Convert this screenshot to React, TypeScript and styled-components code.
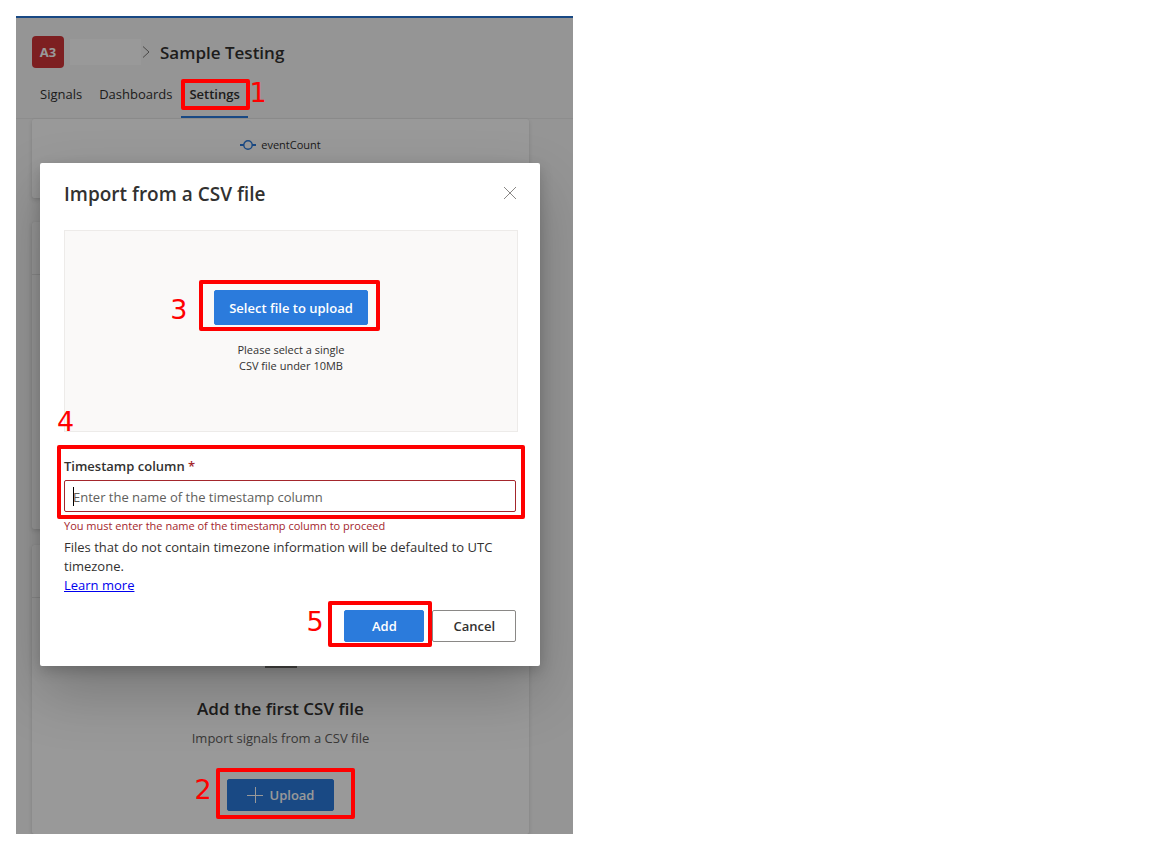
import React from "react";
import styled, { createGlobalStyle, css } from "styled-components";

const GlobalStyle = createGlobalStyle`
  *, *::before, *::after { box-sizing: border-box; }
  body {
    margin: 0;
    background: #fff;
    color: #323130;
    font: 13px/20px "Segoe UI", "Open Sans", "Noto Sans", sans-serif;
  }
  button, input { font: inherit; color: inherit; }
  h1, h2, p { margin: 0; }
`;

const Page = styled.div`
  padding: 16px;
`;

const Screen = styled.div`
  position: relative;
  display: flex;
  flex-direction: column;
  max-width: 557px;
  overflow: hidden;
  background: #f8f8f8;
`;

const TopBar = styled.div`
  height: 2px;
  background: #2b7bdc;
`;

const Header = styled.header`
  display: flex;
  flex-direction: column;
  justify-content: space-between;
  height: 101px;
  padding: 18px 16px 0;
  border-bottom: 1px solid #ececec;
`;

const Breadcrumb = styled.div`
  display: flex;
  align-items: center;
`;

const Avatar = styled.span`
  display: grid;
  place-items: center;
  width: 32px;
  height: 32px;
  border-radius: 4px;
  background: #d13438;
  color: #fff;
  font-weight: 700;
`;

const ProjectName = styled.span`
  width: 71px;
  height: 26px;
  margin-left: 6px;
  background: #fff;
`;

const Chevron = styled.svg`
  width: 9px;
  height: 14px;
  margin: 0 9px 0 1px;
`;

const PageTitle = styled.h1`
  padding-top: 2px;
  font-size: 17px;
  font-weight: 600;
  line-height: 24px;
`;

const Tabs = styled.nav`
  display: flex;
  gap: 1px;
`;

const Tab = styled.a<{ $active?: boolean }>`
  position: relative;
  height: 36px;
  padding: 2px 8px 0;
  color: #323130;
  text-decoration: none;
  ${(p) =>
    p.$active &&
    css`
      font-weight: 600;
      border-bottom: 2px solid #2b7bdc;
    `}
`;

const Content = styled.main`
  display: flex;
  flex-direction: column;
  padding: 0 44px 0 16px;
`;

const Card = styled.section<{ $height: number; $gap?: number }>`
  display: flex;
  flex-direction: column;
  height: ${(p) => p.$height}px;
  margin-bottom: ${(p) => p.$gap ?? 0}px;
  border-radius: 2px;
  background: #fff;
  box-shadow: 0 2px 4px rgba(0, 0, 0, 0.13), 0 0 1px rgba(0, 0, 0, 0.11);
`;

const CardHead = styled.div`
  height: 53px;
  flex: none;
  border-bottom: 1px solid #e6e6e6;
`;

const Legend = styled.div`
  display: flex;
  align-items: center;
  justify-content: center;
  gap: 5px;
  padding-top: 16px;
  font-size: 11px;
`;

const EmptyState = styled.div`
  display: flex;
  flex-direction: column;
  align-items: center;
  padding-top: 38px;
`;

const EmptyTitle = styled.h2`
  margin-top: 29px;
  font-size: 17px;
  font-weight: 600;
  line-height: 24px;
`;

const EmptyText = styled.p`
  margin: 7px 0 31px;
  color: #605e5c;
`;

const Marked = styled.div`
  position: relative;
`;

const Button = styled.button<{ $primary?: boolean; $tall?: boolean; $pad?: number }>`
  display: inline-flex;
  align-items: center;
  justify-content: center;
  gap: 7px;
  min-width: 80px;
  height: ${(p) => (p.$tall ? 35 : 32)}px;
  padding: 0 ${(p) => p.$pad ?? 14}px;
  border: 1px solid ${(p) => (p.$primary ? "#2b7bdc" : "#8a8886")};
  border-radius: 2px;
  background: ${(p) => (p.$primary ? "#2b7bdc" : "#fff")};
  color: ${(p) => (p.$primary ? "#fff" : "#323130")};
  font-weight: 600;
  white-space: nowrap;
`;

const Mark = styled.span<{ $inset: string }>`
  position: absolute;
  z-index: 3;
  inset: ${(p) => p.$inset};
  border: 4px solid #f00;
  border-radius: 2px;
  pointer-events: none;
`;

const StepNumber = styled.span<{ $left: number; $top: number }>`
  position: absolute;
  z-index: 3;
  left: ${(p) => p.$left}px;
  top: ${(p) => p.$top}px;
  color: #f00;
  font: 400 27px/32px "DejaVu Sans", sans-serif;
  pointer-events: none;
`;

const Overlay = styled.div`
  position: absolute;
  z-index: 1;
  inset: 0;
  padding: 147px 33px 0 24px;
  background: rgba(0, 0, 0, 0.4);
`;

const Dialog = styled.div`
  display: flex;
  flex-direction: column;
  padding: 16px 24px 24px;
  border-radius: 2px;
  background: #fff;
  box-shadow: 0 26px 58px rgba(0, 0, 0, 0.22), 0 5px 14px rgba(0, 0, 0, 0.18);
`;

const DialogHead = styled.div`
  display: flex;
  align-items: flex-start;
  justify-content: space-between;
  height: 30px;
`;

const DialogTitle = styled.h2`
  font-size: 19px;
  font-weight: 600;
  line-height: 30px;
`;

const CloseButton = styled.button`
  display: grid;
  place-items: center;
  width: 12px;
  height: 28px;
  padding: 0;
  border: 0;
  background: none;
`;

const DropZone = styled.div`
  display: flex;
  flex-direction: column;
  align-items: center;
  gap: 17px;
  height: 202px;
  margin: 21px -2px 24px 0;
  padding-top: 59px;
  border: 1px solid #edebe9;
  background: #faf9f8;
`;

const Hint = styled.p`
  font-size: 11px;
  line-height: 16px;
  text-align: center;
`;

const Field = styled.div`
  position: relative;
  display: flex;
  flex-direction: column;
  gap: 4px;
`;

const Label = styled.label`
  font-weight: 600;
`;

const Required = styled.span`
  color: #a4262c;
`;

const InputBox = styled.div`
  position: relative;
`;

const Caret = styled.span`
  position: absolute;
  left: 9px;
  top: 7px;
  width: 1px;
  height: 19px;
  background: #000;
`;

const Input = styled.input`
  display: block;
  width: 100%;
  height: 32px;
  padding: 2px 8px 0;
  border: 1px solid #a4262c;
  border-radius: 2px;
  background: #fff;
  outline: none;
  &::placeholder { color: #605e5c; opacity: 1; }
`;

const ErrorText = styled.p`
  margin-top: 6px;
  color: #a4262c;
  font-size: 11px;
  line-height: 16px;
`;

const Note = styled.p`
  margin-top: 4px;
  line-height: 19px;
`;

const Link = styled.a`
  align-self: flex-start;
  color: #00e;
  line-height: 19px;
`;

const Actions = styled.div`
  display: flex;
  justify-content: flex-end;
  gap: 8px;
  margin-top: 15px;
`;

export default function App() {
  return (
    <Page>
      <GlobalStyle />
      <Screen>
        <TopBar />
        <Header>
          <Breadcrumb>
            <Avatar>A3</Avatar>
            <ProjectName />
            <Chevron viewBox="0 0 9 14" fill="none" stroke="#7a7876">
              <path d="M1 1.5 7 7 1 12.5" />
            </Chevron>
            <PageTitle>Sample Testing</PageTitle>
          </Breadcrumb>
          <Tabs>
            <Tab href="#signals">Signals</Tab>
            <Tab href="#dashboards">Dashboards</Tab>
            <Tab href="#settings" $active>
              Settings
              <Mark $inset="-3px -2px 6px 0" />
              <StepNumber $left={68} $top={-5}>1</StepNumber>
            </Tab>
          </Tabs>
        </Header>

        <Content>
          <Card $height={79} $gap={24}>
            <Legend>
              <svg width="16" height="12" viewBox="0 0 16 12" fill="none" stroke="#2b7bdc">
                <path d="M0 6h4M12 6h4" strokeWidth="2" />
                <circle cx="8" cy="6" r="4.2" strokeWidth="1.4" />
              </svg>
              eventCount
            </Legend>
          </Card>
          <Card $height={307} $gap={16}>
            <CardHead />
          </Card>
          <Card $height={289}>
            <CardHead />
            <EmptyState>
              <svg width="32" height="32" viewBox="0 0 32 32" fill="none" stroke="#7a7876" strokeWidth="2">
                <path d="M0 31h32M16 24V3M8 11l8-8 8 8" />
              </svg>
              <EmptyTitle>Add the first CSV file</EmptyTitle>
              <EmptyText>Import signals from a CSV file</EmptyText>
              <Marked>
                <Button $primary $pad={19} type="button">
                  <svg width="16" height="16" viewBox="0 0 16 16" stroke="#fff">
                    <path d="M8.5 0v16M0 8.5h16" />
                  </svg>
                  Upload
                </Button>
                <Mark $inset="-11px -21px -8px -11px" />
                <StepNumber $left={-32} $top={-5}>2</StepNumber>
              </Marked>
            </EmptyState>
          </Card>
        </Content>

        <Overlay>
          <Dialog role="dialog" aria-modal="true" aria-labelledby="dialog-title">
            <DialogHead>
              <DialogTitle id="dialog-title">Import from a CSV file</DialogTitle>
              <CloseButton type="button" aria-label="Close">
                <svg width="12" height="12" viewBox="0 0 12 12" stroke="#8a8886">
                  <path d="M0 0l12 12M12 0L0 12" />
                </svg>
              </CloseButton>
            </DialogHead>
            <DropZone>
              <Marked>
                <Button $primary $tall type="button">Select file to upload</Button>
                <Mark $inset="-10px -12px -6px -15px" />
                <StepNumber $left={-44} $top={4}>3</StepNumber>
              </Marked>
              <Hint>
                Please select a single
                <br />
                CSV file under 10MB
              </Hint>
            </DropZone>
            <Field>
              <Label htmlFor="timestamp-column">
                Timestamp column <Required>*</Required>
              </Label>
              <InputBox>
                <Input id="timestamp-column" type="text" placeholder="Enter the name of the timestamp column" />
                <Caret />
              </InputBox>
              <Mark $inset="-11px -9px -7px -7px" />
              <StepNumber $left={-7} $top={-50}>4</StepNumber>
            </Field>
            <ErrorText>You must enter the name of the timestamp column to proceed</ErrorText>
            <Note>Files that do not contain timezone information will be defaulted to UTC timezone.</Note>
            <Link href="#learn-more">Learn more</Link>
            <Actions>
              <Marked>
                <Button $primary type="button">Add</Button>
                <Mark $inset="-9px -8px -5px -16px" />
                <StepNumber $left={-38} $top={-4}>5</StepNumber>
              </Marked>
              <Button $pad={20} type="button">Cancel</Button>
            </Actions>
          </Dialog>
        </Overlay>
      </Screen>
    </Page>
  );
}
